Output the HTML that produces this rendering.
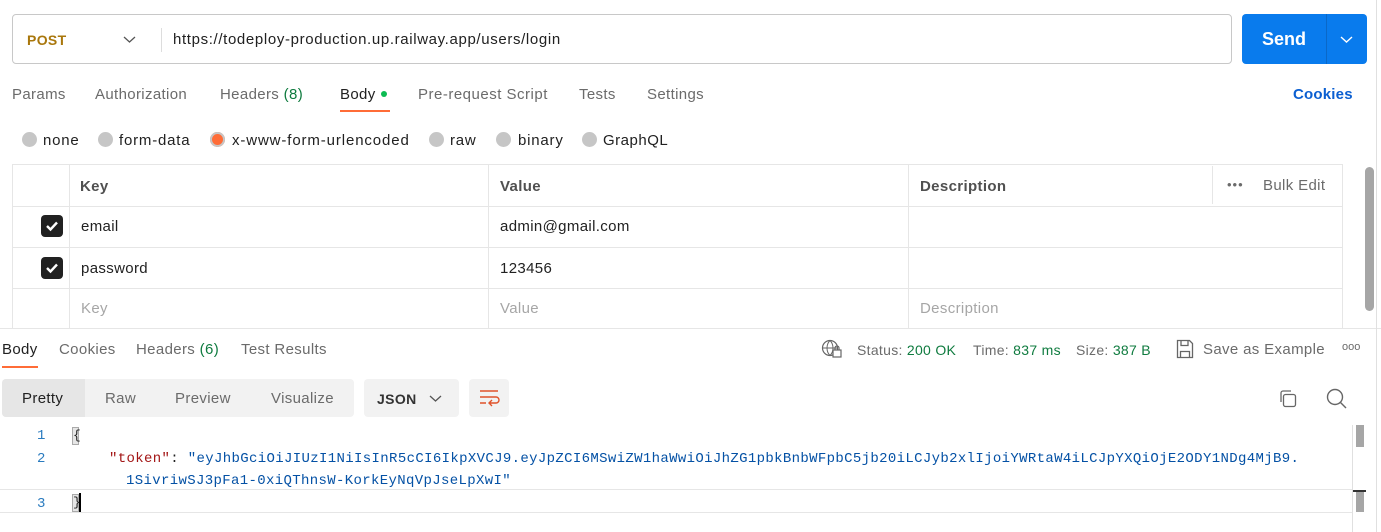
<!DOCTYPE html>
<html><head><style>
*{box-sizing:border-box;margin:0;padding:0}
body{width:1381px;height:532px;background:#fff;font-family:"Liberation Sans",Arial,sans-serif;font-size:15px;color:#212121;position:relative;overflow:hidden;letter-spacing:0.35px}
.a{position:absolute;white-space:nowrap}
.g{color:#6b6b6b}
.grn{color:#0f7b3f}
.radio{position:absolute;width:15px;height:15px;border-radius:50%;background:#c6c6c6;top:132px}
.rl{letter-spacing:0.8px}
.cb{position:absolute;left:41px;width:22px;height:22px;border-radius:4px;background:#212121}
.cb svg{position:absolute;left:4px;top:5px}
.mono{font-family:"Liberation Mono","DejaVu Sans Mono",monospace;font-size:14px;letter-spacing:0.35px}
.hl{position:absolute;background:#e6e6e6}
</style></head><body>
<div class="a" style="left:12px;top:14px;width:1220px;height:50px;border:1px solid #c8c8c8;border-radius:4px"></div>
<div class="a" style="left:27px;top:32px;color:#a9770c;font-weight:bold;font-size:14px">POST</div>
<svg class="a" style="left:123px;top:35px" width="13" height="9"><path d="M1 2l5.5 5 5.5-5" fill="none" stroke="#555" stroke-width="1.3"/></svg>
<div class="a" style="left:161px;top:28px;width:1px;height:24px;background:#ddd"></div>
<div class="a" style="left:173px;top:31px;font-size:15px;letter-spacing:0.64px">https://todeploy-production.up.railway.app/users/login</div>
<div class="a" style="left:1242px;top:14px;width:125px;height:50px;background:#097bed;border-radius:4px"></div>
<div class="a" style="left:1326px;top:14px;width:1px;height:50px;background:#0a68c8"></div>
<div class="a" style="left:1262px;top:29px;color:#fff;font-weight:bold;font-size:18px;letter-spacing:0">Send</div>
<svg class="a" style="left:1340px;top:35px" width="13" height="9"><path d="M1 2l5.5 5 5.5-5" fill="none" stroke="#fff" stroke-width="1.4"/></svg>
<div class="a g" style="left:12px;top:86px">Params</div>
<div class="a g" style="left:95px;top:86px">Authorization</div>
<div class="a g" style="left:220px;top:86px">Headers <span class="grn">(8)</span></div>
<div class="a" style="left:340px;top:86px">Body</div>
<div class="a" style="left:381px;top:91px;width:6px;height:6px;border-radius:50%;background:#0cbb52"></div>
<div class="a" style="left:340px;top:110px;width:50px;height:2px;background:#ff6c37"></div>
<div class="a g" style="left:418px;top:86px;letter-spacing:0.5px">Pre-request Script</div>
<div class="a g" style="left:579px;top:86px">Tests</div>
<div class="a g" style="left:647px;top:86px">Settings</div>
<div class="a" style="left:1293px;top:86px;color:#0b5fd1;font-weight:bold;letter-spacing:0.2px">Cookies</div>
<div class="radio" style="left:22px"></div><div class="a rl" style="left:43px;top:132px">none</div>
<div class="radio" style="left:98px"></div><div class="a rl" style="left:119px;top:132px">form-data</div>
<div class="radio" style="left:210px;background:#ff6c37;box-shadow:0 0 0 2px #c6c6c6 inset"></div><div class="a rl" style="left:232px;top:132px;letter-spacing:0.88px">x-www-form-urlencoded</div>
<div class="radio" style="left:429px"></div><div class="a rl" style="left:450px;top:132px">raw</div>
<div class="radio" style="left:496px"></div><div class="a rl" style="left:518px;top:132px">binary</div>
<div class="radio" style="left:582px"></div><div class="a rl" style="left:603px;top:132px;letter-spacing:0.5px">GraphQL</div>
<div class="a" style="left:12px;top:164px;width:1331px;height:165px;border:1px solid #e6e6e6;border-bottom:none"></div>
<div class="a" style="left:12px;top:206px;width:1331px;height:1px;background:#e6e6e6"></div>
<div class="a" style="left:12px;top:247px;width:1331px;height:1px;background:#e6e6e6"></div>
<div class="a" style="left:12px;top:288px;width:1331px;height:1px;background:#e6e6e6"></div>
<div class="a" style="left:0;top:328px;width:1381px;height:1px;background:#e6e6e6"></div>
<div class="a" style="left:69px;top:164px;width:1px;height:164px;background:#e6e6e6"></div>
<div class="a" style="left:488px;top:164px;width:1px;height:164px;background:#e6e6e6"></div>
<div class="a" style="left:908px;top:164px;width:1px;height:164px;background:#e6e6e6"></div>
<div class="a" style="left:1212px;top:166px;width:1px;height:38px;background:#e6e6e6"></div>
<div class="a" style="left:80px;top:178px;font-weight:bold;color:#505050">Key</div>
<div class="a" style="left:500px;top:178px;font-weight:bold;color:#505050">Value</div>
<div class="a" style="left:920px;top:178px;font-weight:bold;color:#505050">Description</div>
<div class="a g" style="left:1227px;top:177px;font-size:13px;letter-spacing:1px">•••</div>
<div class="a g" style="left:1263px;top:177px">Bulk Edit</div>
<div class="cb" style="top:215px"><svg width="14" height="12"><path d="M2 6l3.5 3.5L12 2.5" fill="none" stroke="#fff" stroke-width="2.4"/></svg></div>
<div class="a" style="left:81px;top:218px">email</div>
<div class="a" style="left:500px;top:218px">admin@gmail.com</div>
<div class="cb" style="top:257px"><svg width="14" height="12"><path d="M2 6l3.5 3.5L12 2.5" fill="none" stroke="#fff" stroke-width="2.4"/></svg></div>
<div class="a" style="left:81px;top:260px">password</div>
<div class="a" style="left:500px;top:260px">123456</div>
<div class="a" style="left:81px;top:300px;color:#a6a6a6">Key</div>
<div class="a" style="left:500px;top:300px;color:#a6a6a6">Value</div>
<div class="a" style="left:920px;top:300px;color:#a6a6a6">Description</div>
<div class="a" style="left:1365px;top:167px;width:9px;height:144px;border-radius:5px;background:#a6a6a6"></div>
<div class="a" style="left:1376px;top:0;width:1px;height:532px;background:#e0e0e0"></div>
<div class="a" style="left:2px;top:341px">Body</div>
<div class="a" style="left:2px;top:366px;width:36px;height:2px;background:#ff6c37"></div>
<div class="a g" style="left:59px;top:341px">Cookies</div>
<div class="a g" style="left:136px;top:341px">Headers <span class="grn">(6)</span></div>
<div class="a g" style="left:241px;top:341px">Test Results</div>
<svg class="a" style="left:821px;top:339px" width="22" height="20"><circle cx="9" cy="9" r="7.5" fill="none" stroke="#666" stroke-width="1.2"/><path d="M1.5 9h15M9 1.5c-4 4-4 11 0 15M9 1.5c4 4 4 11 0 15" fill="none" stroke="#666" stroke-width="1"/><rect x="12" y="11" width="8" height="7" fill="#fff" stroke="#666" stroke-width="1.2"/><path d="M14 11V9a2 2 0 014 0v2" fill="none" stroke="#666" stroke-width="1.2"/></svg>
<div class="a g" style="left:857px;top:342px;font-size:14px;letter-spacing:0.3px">Status: <span class="grn">200 OK</span></div>
<div class="a g" style="left:973px;top:342px;font-size:14px;letter-spacing:0.3px">Time: <span class="grn">837 ms</span></div>
<div class="a g" style="left:1076px;top:342px;font-size:14px;letter-spacing:0.3px">Size: <span class="grn">387 B</span></div>
<svg class="a" style="left:1176px;top:339px" width="18" height="20"><path d="M1.5 1.5h12l3 3v14h-15z" fill="none" stroke="#666" stroke-width="1.3"/><path d="M5 1.5v5h7v-5M4.5 18.5v-6h9v6" fill="none" stroke="#666" stroke-width="1.3"/></svg>
<div class="a g" style="left:1203px;top:341px">Save as Example</div>
<div class="a g" style="left:1342px;top:341px;font-size:11px;letter-spacing:0">ooo</div>
<div class="a" style="left:2px;top:379px;width:352px;height:38px;background:#f2f2f2;border-radius:4px"></div>
<div class="a" style="left:2px;top:379px;width:83px;height:38px;background:#e6e6e6;border-radius:4px 0 0 4px"></div>
<div class="a" style="left:22px;top:390px">Pretty</div>
<div class="a g" style="left:105px;top:390px">Raw</div>
<div class="a g" style="left:175px;top:390px">Preview</div>
<div class="a g" style="left:271px;top:390px">Visualize</div>
<div class="a" style="left:364px;top:379px;width:95px;height:38px;background:#f2f2f2;border-radius:4px"></div>
<div class="a" style="left:377px;top:391px;font-weight:bold;font-size:14px;color:#333">JSON</div>
<svg class="a" style="left:429px;top:394px" width="13" height="9"><path d="M1 2l5.5 5 5.5-5" fill="none" stroke="#555" stroke-width="1.3"/></svg>
<div class="a" style="left:469px;top:379px;width:40px;height:38px;background:#f2f2f2;border-radius:4px"></div>
<svg class="a" style="left:478px;top:389px" width="22" height="18"><path d="M2 2h18M2 8h16a3 3 0 010 6h-6M2 14h6M14 11l-3 3 3 3" fill="none" stroke="#e0532a" stroke-width="1.4"/></svg>
<svg class="a" style="left:1278px;top:389px" width="20" height="20"><rect x="5.5" y="5.5" width="12" height="12" rx="2" fill="none" stroke="#666" stroke-width="1.3"/><path d="M3 13V4a2 2 0 012-2h8" fill="none" stroke="#666" stroke-width="1.3"/></svg>
<svg class="a" style="left:1326px;top:388px" width="22" height="22"><circle cx="9" cy="9" r="7.5" fill="none" stroke="#666" stroke-width="1.4"/><path d="M14.5 14.5l5.5 5.5" stroke="#666" stroke-width="1.4"/></svg>
<div class="a mono" style="left:37px;top:428px;color:#2a7bbf">1</div>
<div class="a mono" style="left:37px;top:451px;color:#2a7bbf">2</div>
<div class="a mono" style="left:37px;top:496px;color:#2a7bbf">3</div>
<div class="a" style="left:0;top:489px;width:1352px;height:1px;background:#e6e6e6"></div>
<div class="a" style="left:0;top:512px;width:1352px;height:1px;background:#e6e6e6"></div>
<div class="hl" style="left:72px;top:427px;width:7px;height:18px;border:1px solid #aaa"></div>
<div class="a mono" style="left:73px;top:428px;font-size:13px">{</div>
<div class="hl" style="left:72px;top:494px;width:7px;height:18px;border:1px solid #aaa"></div>
<div class="a mono" style="left:73px;top:495px;font-size:13px">}</div>
<div class="a" style="left:79px;top:493px;width:2px;height:19px;background:#000"></div>
<div class="a mono" style="left:109px;top:451px"><span style="color:#a31515">"token"</span>: <span style="color:#0451a5">"eyJhbGciOiJIUzI1NiIsInR5cCI6IkpXVCJ9.eyJpZCI6MSwiZW1haWwiOiJhZG1pbkBnbWFpbC5jb20iLCJyb2xlIjoiYWRtaW4iLCJpYXQiOjE2ODY1NDg4MjB9.</span></div>
<div class="a mono" style="left:126px;top:473px;color:#0451a5">1SivriwSJ3pFa1-0xiQThnsW-KorkEyNqVpJseLpXwI"</div>
<div class="a" style="left:1356px;top:425px;width:8px;height:22px;background:#a6a6a6"></div>
<div class="a" style="left:1352px;top:490px;width:14px;height:2px;background:#333"></div>
<div class="a" style="left:1356px;top:492px;width:8px;height:20px;background:#a6a6a6"></div>
<div class="a" style="left:1352px;top:425px;width:1px;height:107px;background:#e0e0e0"></div>
</body></html>
